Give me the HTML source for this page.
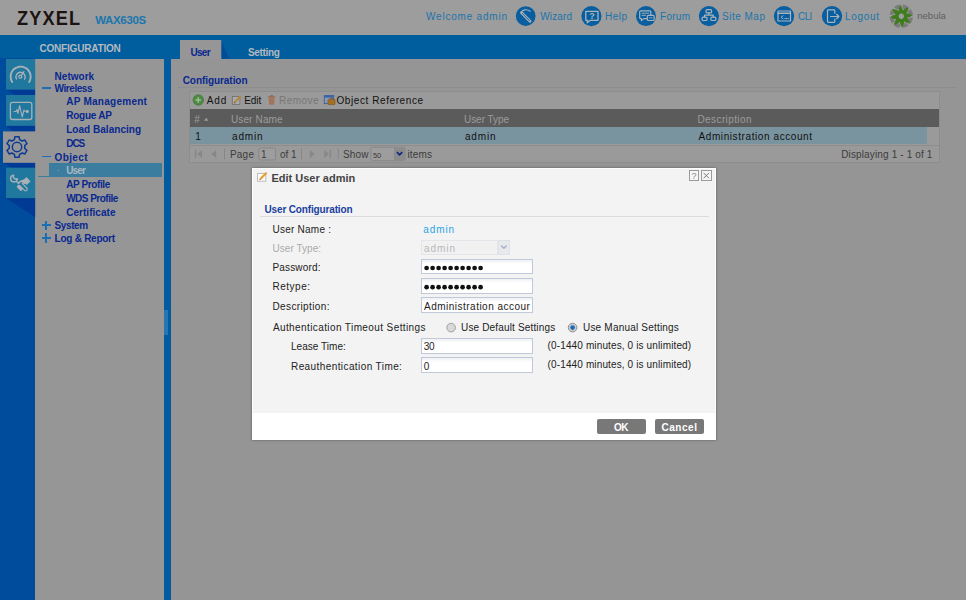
<!DOCTYPE html>
<html lang="en"><head><meta charset="utf-8"><title>ZYXEL WAX630S</title>
<style>
html,body{margin:0;padding:0}
body{width:966px;height:600px;position:relative;overflow:hidden;background:#959595;font-family:"Liberation Sans",sans-serif}
.t{position:absolute;white-space:pre;line-height:1;font-family:"Liberation Sans",sans-serif}
.b{position:absolute;box-sizing:border-box}
svg{position:absolute;overflow:visible}
.inp{border:1px solid #c0c8da;background:linear-gradient(#eef0f4 0,#fff 4px)}

</style></head>
<body>
<!-- header -->
<div class="b" style="left:0;top:0;width:966px;height:35px;background:#9d9d9d"></div>
<!-- blue bar -->
<div class="b" style="left:0;top:35px;width:966px;height:23.5px;background:#005e9e"></div>
<!-- left column -->
<div class="b" style="left:0;top:58px;width:36px;height:542px;background:#004c9c"></div>
<!-- menu panel -->
<div class="b" style="left:35.2px;top:58.5px;width:129px;height:542px;background:#969696"></div>
<!-- splitter -->
<div class="b" style="left:164px;top:58px;width:7.3px;height:542px;background:#005c9e"></div>
<div class="b" style="left:164px;top:310px;width:4px;height:25px;background:#2277b4"></div>
<!-- icon tabs -->
<svg width="36" height="600" style="left:0;top:0">
  <polygon points="6,89.5 35.2,89.5 35.2,95 16,95" fill="#003a94"/>
  <polygon points="6,125.7 35.2,125.7 35.2,131.5 14,131.5" fill="#003a94"/><polygon points="4,162.7 35.2,162.7 35.2,167.9 12,167.9" fill="#003a94"/>
  <polygon points="5.6,198 35.2,198 35.2,217" fill="#003a94"/>
  <rect x="6" y="59" width="29.2" height="30.6" fill="#20789f"/>
  <rect x="6" y="95" width="29.2" height="30.8" fill="#20789f"/>
  <rect x="3" y="131.4" width="33" height="31.4" fill="#969696"/>
  <rect x="6" y="167.7" width="29.2" height="30.4" fill="#20789f"/>
</svg>
<!-- content tabs -->
<svg width="966" height="60" style="left:0;top:0">
  <polygon points="221,40 221,58.5 229,58.5" fill="#004c98"/>
  <rect x="180" y="40" width="41.3" height="19" fill="#969696"/>
</svg>
<!-- menu highlight -->
<div class="b" style="left:49px;top:163.2px;width:113px;height:13px;background:#3b7d9e"></div>
<div class="b" style="left:38px;top:176px;width:124px;height:1px;background:#3b7d9e"></div>
<!-- tree icons -->
<div class="b" style="left:41.6px;top:87.4px;width:9.3px;height:1.8px;background:#1c6eb4"></div>
<div class="b" style="left:41.6px;top:155.7px;width:9.3px;height:1.8px;background:#1c6eb4"></div>
<div class="b" style="left:41.6px;top:224.4px;width:9.3px;height:1.8px;background:#1c6eb4"></div>
<div class="b" style="left:45.4px;top:220.7px;width:1.8px;height:9.3px;background:#1c6eb4"></div>
<div class="b" style="left:41.6px;top:237px;width:9.3px;height:1.8px;background:#1c6eb4"></div>
<div class="b" style="left:45.4px;top:233.3px;width:1.8px;height:9.3px;background:#1c6eb4"></div>
<div class="b" style="left:45.5px;top:75.5px;width:1.5px;height:1.2px;background:#8f9bb0"></div>
<div class="b" style="left:57.5px;top:101px;width:1.5px;height:1.2px;background:#8f9bb0"></div>
<div class="b" style="left:57.5px;top:115px;width:1.5px;height:1.2px;background:#8f9bb0"></div>
<div class="b" style="left:57.5px;top:129px;width:1.5px;height:1.2px;background:#8f9bb0"></div>
<div class="b" style="left:57.5px;top:142.7px;width:1.5px;height:1.2px;background:#8f9bb0"></div>
<div class="b" style="left:57.5px;top:169.8px;width:1.5px;height:1.2px;background:#7fa3b8"></div>
<div class="b" style="left:57.5px;top:183.6px;width:1.5px;height:1.2px;background:#8f9bb0"></div>
<div class="b" style="left:57.5px;top:197.5px;width:1.5px;height:1.2px;background:#8f9bb0"></div>
<div class="b" style="left:57.5px;top:211.4px;width:1.5px;height:1.2px;background:#8f9bb0"></div>

<!-- content: config line -->
<div class="b" style="left:178px;top:86.5px;width:779px;height:1px;background:#8d8d8d"></div>
<!-- grid -->
<div class="b" style="left:189px;top:91px;width:751px;height:72px;border:1px solid #8d8d8d;background:#9a9a9a"></div>
<div class="b" style="left:190px;top:109.3px;width:749px;height:17.5px;background:#5b5b5b"></div>
<div class="b" style="left:190px;top:126.8px;width:737px;height:17.6px;background:#7a949f"></div>
<div class="b" style="left:190px;top:144.5px;width:749px;height:1px;background:#8d8d8d"></div>

<!-- modal -->
<div class="b" style="left:252.3px;top:168px;width:464px;height:272px;background:#f3f3f3;border:1px solid #fdfdfd;box-shadow:0 0 2.5px rgba(0,0,0,.4)"></div>
<div class="b" style="left:253px;top:413px;width:462.3px;height:26.5px;background:#fff"></div>
<div class="b" style="left:260px;top:216px;width:449px;height:1px;background:#dcdcdc"></div>
<!-- inputs -->
<div class="b inp" style="left:421px;top:259.2px;width:112px;height:15.3px"></div>
<div class="b inp" style="left:421px;top:278.3px;width:112px;height:15.3px"></div>
<div class="b inp" style="left:421px;top:297.3px;width:112px;height:15.8px"></div>
<div class="b inp" style="left:421px;top:338px;width:112px;height:16px"></div>
<div class="b inp" style="left:421px;top:357.2px;width:112px;height:15.8px"></div>
<!-- disabled select -->
<div class="b" style="left:421px;top:239.8px;width:77px;height:15.3px;border:1px solid #e3e5eb;background:#f1f1f1"></div>
<div class="b" style="left:498px;top:239.8px;width:12px;height:15.3px;border:1px solid #dee1e7;background:#e7e9ed"></div>
<!-- buttons -->
<div class="b" style="left:596.8px;top:419.3px;width:49px;height:15px;background:#787878;border-radius:2px"></div>
<div class="b" style="left:654.7px;top:419.3px;width:49px;height:15px;background:#787878;border-radius:2px"></div>
<!-- window tools -->
<div class="b" style="left:688.8px;top:170.3px;width:10.6px;height:10.6px;border:1px solid #9a9a9a;background:#f6f6f6"></div>
<div class="b" style="left:701px;top:170.3px;width:10.6px;height:10.6px;border:1px solid #9a9a9a;background:#f6f6f6"></div>
<!-- header icons -->
<svg width="966" height="35" style="left:0;top:0">
  <g fill="#085e9e">
    <circle cx="525.7" cy="16.1" r="9.9"/>
    <circle cx="591.4" cy="16.1" r="10.1"/>
    <circle cx="646" cy="16.1" r="10"/>
    <circle cx="708.9" cy="16.1" r="10.1"/>
    <circle cx="784" cy="16.1" r="10.2"/>
    <circle cx="832" cy="16.1" r="10.2"/>
  </g>
  <g fill="none" stroke="#aab4bc" stroke-width="1.2" stroke-linecap="round" stroke-linejoin="round">
    <!-- wizard wand -->
    <path d="M521.6 12.8 L530 21.2" stroke-width="2.9"/>
    <path d="M522.4 13.6 L529.6 20.8" stroke="#085e9e" stroke-width="0.9"/>
    <path d="M520.9 12.3 C522.5 9.4 527 8.9 530.2 11.2" stroke-width="1.2"/>
    <!-- help bubble -->
    <path d="M585.8 11.3 h12.2 v9 h-7.6 l-3.2 2.4 l0.4 -2.4 h-1.8 z" stroke-width="1.3"/>
    <!-- forum bubbles -->
    <path d="M640.6 10.8 h9.3 q0.9 0 0.9 0.9 v6 q0 0.9 -0.9 0.9 h-6.1 l-2.4 2 v-2 h-0.8 q-0.9 0 -0.9 -0.9 v-6 q0 -0.9 0.9 -0.9 z"/>
    <rect x="647.3" y="15.4" width="6.8" height="5.1" rx="0.9" fill="#085e9e"/>
    <path d="M642 13.2 h6.6 M642 15.3 h3.6" stroke-width="0.9"/>
    <path d="M649.2 17.9 h3" stroke-width="0.8"/>
    <!-- site map -->
    <rect x="706" y="9.7" width="5.6" height="3.2" rx="1"/>
    <path d="M708.8 12.9 v2.3 M704.5 17.1 v-1.9 h8.8 v1.9"/>
    <rect x="702" y="17.1" width="5.1" height="3.4" rx="1.3"/>
    <rect x="710.8" y="17.1" width="5.1" height="3.4" rx="1.3"/>
    <!-- cli -->
    <rect x="778" y="11" width="12.5" height="10"/>
    <path d="M778 13.2 h12.5" stroke-width="1.4"/>
    <path d="M783 15.8 l-2 1.5 l2 1.5" stroke-width="1"/>
    <path d="M784.8 18.6 h3.6" stroke-width="1" stroke-dasharray="0.6 1"/>
    <!-- logout -->
    <path d="M834.8 13.2 v-2.6 q0 -0.8 -0.8 -0.8 h-5.7 q-0.8 0 -0.8 0.8 v11 q0 0.8 0.8 0.8 h5.7 q0.8 0 0.8 -0.8 v-2.6"/>
    <path d="M830.5 16.5 h8.2 M836.6 14.3 l2.3 2.2 l-2.3 2.2"/>
  </g>
  <text x="591.9" y="19.1" text-anchor="middle" font-family="Liberation Sans, sans-serif" font-size="9" font-weight="700" fill="#aab4bc">?</text>
  <!-- nebula -->
  <g transform="translate(901.3 16.2)">
    <g fill="#7b7b7b">
      <g id="nb"><path d="M-3.2 -11.3 Q0 -12.3 3.2 -11.3 L1.6 -7.6 Q0 -8 -1.6 -7.6 Z" transform="rotate(22.5)"/></g>
      <path d="M-3.2 -11.3 Q0 -12.3 3.2 -11.3 L1.6 -7.6 Q0 -8 -1.6 -7.6 Z" transform="rotate(67.5)"/>
      <path d="M-3.2 -11.3 Q0 -12.3 3.2 -11.3 L1.6 -7.6 Q0 -8 -1.6 -7.6 Z" transform="rotate(112.5)"/>
      <path d="M-3.2 -11.3 Q0 -12.3 3.2 -11.3 L1.6 -7.6 Q0 -8 -1.6 -7.6 Z" transform="rotate(157.5)"/>
      <path d="M-3.2 -11.3 Q0 -12.3 3.2 -11.3 L1.6 -7.6 Q0 -8 -1.6 -7.6 Z" transform="rotate(202.5)"/>
      <path d="M-3.2 -11.3 Q0 -12.3 3.2 -11.3 L1.6 -7.6 Q0 -8 -1.6 -7.6 Z" transform="rotate(247.5)"/>
      <path d="M-3.2 -11.3 Q0 -12.3 3.2 -11.3 L1.6 -7.6 Q0 -8 -1.6 -7.6 Z" transform="rotate(292.5)"/>
      <path d="M-3.2 -11.3 Q0 -12.3 3.2 -11.3 L1.6 -7.6 Q0 -8 -1.6 -7.6 Z" transform="rotate(337.5)"/>
    </g>
    <g fill="#3f7c1e">
      <path d="M0.6 -11.6 Q3.2 -6.5 1.9 -3 L-2.5 -2.3 Q-2.6 -7.5 0.6 -11.6 Z" transform="rotate(-8)"/>
      <path d="M0.6 -11.6 Q3.2 -6.5 1.9 -3 L-2.5 -2.3 Q-2.6 -7.5 0.6 -11.6 Z" transform="rotate(37)"/>
      <path d="M0.6 -11.6 Q3.2 -6.5 1.9 -3 L-2.5 -2.3 Q-2.6 -7.5 0.6 -11.6 Z" transform="rotate(82)"/>
      <path d="M0.6 -11.6 Q3.2 -6.5 1.9 -3 L-2.5 -2.3 Q-2.6 -7.5 0.6 -11.6 Z" transform="rotate(127)"/>
      <path d="M0.6 -11.6 Q3.2 -6.5 1.9 -3 L-2.5 -2.3 Q-2.6 -7.5 0.6 -11.6 Z" transform="rotate(172)"/>
      <path d="M0.6 -11.6 Q3.2 -6.5 1.9 -3 L-2.5 -2.3 Q-2.6 -7.5 0.6 -11.6 Z" transform="rotate(217)"/>
      <path d="M0.6 -11.6 Q3.2 -6.5 1.9 -3 L-2.5 -2.3 Q-2.6 -7.5 0.6 -11.6 Z" transform="rotate(262)"/>
      <path d="M0.6 -11.6 Q3.2 -6.5 1.9 -3 L-2.5 -2.3 Q-2.6 -7.5 0.6 -11.6 Z" transform="rotate(307)"/>
    </g>
  </g>
</svg>
<!-- sidebar icons -->
<svg width="40" height="220" style="left:0;top:0">
  <g fill="none" stroke="#a9b1b6" stroke-width="1.3" stroke-linecap="round" stroke-linejoin="round">
    <!-- gauge -->
    <path d="M12.2 82 A10 10 0 1 1 29.1 82" stroke-width="1.9" stroke-dasharray="3.3 0.7"/>
    <path d="M16.5 79 A4.6 4.6 0 1 1 24.5 79.2"/>
    <circle cx="20.3" cy="76.7" r="1.5"/>
    <path d="M21.3 75.5 L23.8 71.6"/>
    <!-- monitor -->
    <rect x="10.4" y="102.3" width="21.4" height="17.2" rx="2"/>
    <path d="M14 111.5 h2 l1 -2 l1 4 l1.6 -8 l2.6 11.5 l1.8 -7 l1.2 1.5 h1.8" stroke-width="1.1"/>
    <circle cx="27.3" cy="111.4" r="0.9" fill="#a9b1b6"/>
  </g>
  <!-- gear -->
  <g transform="translate(17 147)" fill="none" stroke="#0a3a96" stroke-width="1.5" stroke-linejoin="round">
    <circle r="4.7"/>
    <path d="M-2.10,-10.30 L2.10,-10.30 L2.60,-7.46 L5.16,-5.98 L7.87,-6.97 L9.97,-3.33 L7.76,-1.48 L7.76,1.48 L9.97,3.33 L7.87,6.97 L5.16,5.98 L2.60,7.46 L2.10,10.30 L-2.10,10.30 L-2.60,7.46 L-5.16,5.98 L-7.87,6.97 L-9.97,3.33 L-7.76,1.48 L-7.76,-1.48 L-9.97,-3.33 L-7.87,-6.97 L-5.16,-5.98 L-2.60,-7.46 Z"/>
  </g>
  <!-- wrench + hand -->
  <g fill="none" stroke="#a9b1b6" stroke-width="1.4" stroke-linecap="round" stroke-linejoin="round">
    <path d="M13.6 175.2 a3.4 3.4 0 1 0 3.8 3.6 l-2.2 0.3 l-1.9 -1.7 z"/>
    <path d="M16.6 181.6 L18.6 183.6"/>
    <path d="M22.2 183.4 l4.6 4.6 a1.6 1.6 0 0 1 -2.3 2.3 l-4.6 -4.6" stroke-width="1.1"/>
    <path d="M18.8 182.6 q2.5 -2.6 6 -2.4" stroke-width="1.6"/>
  </g>
  <g fill="#a9b1b6">
    <rect x="-2.6" y="-2.9" width="5.2" height="5.8" transform="translate(26.6 181) rotate(-45)"/>
    <path d="M20.5 181 l4 -1.6 l2.5 3.4 l-3 1.4 z"/>
    <rect x="-1.7" y="-3.2" width="3.4" height="6.4" rx="0.8" transform="translate(19.8 187.8) rotate(-45)"/>
  </g>
</svg>
<!-- grid toolbar icons -->
<svg width="966" height="170" style="left:0;top:0">
  <!-- add -->
  <circle cx="198.3" cy="100" r="5.2" fill="#4f8a44" stroke="#41763a" stroke-width="0.8"/>
  <path d="M195.5 100 h5.6 M198.3 97.2 v5.6" stroke="#9dbd96" stroke-width="1.4"/>
  <!-- edit -->
  <rect x="232.3" y="96.5" width="7.6" height="8" fill="#aaaaaa" stroke="#6e6e6e" stroke-width="0.8"/>
  <path d="M234.6 102.4 L240.6 96.2" stroke="#b58a35" stroke-width="2"/>
  <path d="M233.8 103.4 l0.5 -1.6 l1.1 1.1 z" fill="#5a4a3a"/>
  <!-- remove -->
  <path d="M268.6 97.8 h6 l-0.5 7 h-5 z" fill="#a3745c"/>
  <path d="M267.8 96.9 h7.6 M270.3 95.7 h2.6" stroke="#9a6a52" stroke-width="1.2"/>
  <!-- object reference -->
  <rect x="324.3" y="95.6" width="9.4" height="8" fill="#8a9cb4" stroke="#3d5f98" stroke-width="0.9"/>
  <rect x="324.3" y="95.6" width="9.4" height="2" fill="#3a63a8"/>
  <rect x="328" y="99.4" width="7" height="5.2" rx="0.8" fill="#a86f22" stroke="#7a4f18" stroke-width="0.6"/>
  <path d="M330.2 99.3 v-1 h2.6 v1" fill="none" stroke="#7a4f18" stroke-width="0.8"/>
  <!-- sort arrow -->
  <path d="M204 120.8 l2.2 -3 l2.2 3 z" fill="#9c9c9c"/>
  <!-- paging icons -->
  <g fill="#878787">
    <rect x="194.8" y="150" width="1.6" height="8"/>
    <path d="M202 150 v8 l-4.8 -4 z"/>
    <path d="M216.2 150 v8 l-4.8 -4 z"/>
    <path d="M309.8 150 v8 l4.8 -4 z"/>
    <path d="M324.2 150 v8 l4.8 -4 z"/>
    <rect x="329.6" y="150" width="1.6" height="8"/>
    <rect x="224" y="148.5" width="1" height="11"/>
    <rect x="301" y="148.5" width="1" height="11"/>
    <rect x="337.8" y="148.5" width="1" height="11"/>
  </g>
  <rect x="258.9" y="148" width="16.5" height="12" rx="1.5" fill="#9e9e9e" stroke="#878789" stroke-width="1"/>
  <rect x="370.9" y="147.2" width="34.3" height="13.4" rx="1.5" fill="#9d9d9d" stroke="#89898d" stroke-width="1"/>
  <rect x="394" y="147.7" width="10.8" height="12.4" fill="#8b8b8e"/>
  <path d="M397 152.2 l2.6 2.6 l2.6 -2.6" fill="none" stroke="#0a2a7c" stroke-width="1.7"/>
</svg>
<!-- modal icons -->
<svg width="966" height="600" style="left:0;top:0">
  <!-- title icon -->
  <rect x="257.6" y="173.4" width="8.2" height="7.8" fill="#fdfdfd" stroke="#b4b4b4" stroke-width="0.9"/>
  <path d="M260.3 179 L266.6 172.7" stroke="#e2a02c" stroke-width="2.1"/>
  <path d="M259.3 180.2 l0.6 -1.8 l1.2 1.2 z" fill="#c8503a"/>
  <!-- help / close glyphs -->
  <path d="M703.6 172.9 l5.4 5.4 M709 172.9 l-5.4 5.4" stroke="#7c7c7c" stroke-width="1"/>
  <text x="691.6" y="179.3" font-family="Liberation Sans, sans-serif" font-size="9" fill="#8a8a8a">?</text>
  <!-- select arrow -->
  <path d="M501.2 245.6 l2.7 2.6 l2.7 -2.6" fill="none" stroke="#a9b3c8" stroke-width="1.5"/>
  <!-- password dots -->
  <g fill="#111">
    <circle cx="426.6" cy="268" r="2.35"/><circle cx="432.6" cy="268" r="2.35"/><circle cx="438.6" cy="268" r="2.35"/><circle cx="444.6" cy="268" r="2.35"/><circle cx="450.6" cy="268" r="2.35"/>
    <circle cx="456.6" cy="268" r="2.35"/><circle cx="462.6" cy="268" r="2.35"/><circle cx="468.6" cy="268" r="2.35"/><circle cx="474.6" cy="268" r="2.35"/><circle cx="480.6" cy="268" r="2.35"/>
    <circle cx="426.6" cy="287.2" r="2.35"/><circle cx="432.6" cy="287.2" r="2.35"/><circle cx="438.6" cy="287.2" r="2.35"/><circle cx="444.6" cy="287.2" r="2.35"/><circle cx="450.6" cy="287.2" r="2.35"/>
    <circle cx="456.6" cy="287.2" r="2.35"/><circle cx="462.6" cy="287.2" r="2.35"/><circle cx="468.6" cy="287.2" r="2.35"/><circle cx="474.6" cy="287.2" r="2.35"/><circle cx="480.6" cy="287.2" r="2.35"/>
  </g>
  <!-- radios -->
  <circle cx="451.1" cy="327.6" r="4.3" fill="#d9d9d9" stroke="#a0a0a0" stroke-width="1"/>
  <circle cx="572.6" cy="327.6" r="4.3" fill="#cfcfcf" stroke="#8f8f8f" stroke-width="1"/>
  <circle cx="572.6" cy="327.6" r="2.3" fill="#1a6ab8"/>
</svg>

<span class="t" style="left:16.8px;top:9.0px;font-size:19.5px;font-weight:700;color:#1c1212;letter-spacing:1.25px;transform:scaleX(0.93);transform-origin:0 0;">ZYXEL</span>
<span class="t" style="left:95.2px;top:15.0px;font-size:11.5px;font-weight:700;color:#1a76ae;letter-spacing:-0.34px;">WAX630S</span>
<span class="t" style="left:426.0px;top:12.0px;font-size:10px;font-weight:400;color:#1b74ab;letter-spacing:0.79px;">Welcome admin</span>
<span class="t" style="left:540.3px;top:12.0px;font-size:10px;font-weight:400;color:#1b74ab;letter-spacing:0.12px;">Wizard</span>
<span class="t" style="left:605.0px;top:12.0px;font-size:10px;font-weight:400;color:#1b74ab;letter-spacing:0.47px;">Help</span>
<span class="t" style="left:660.0px;top:12.0px;font-size:10px;font-weight:400;color:#1b74ab;letter-spacing:0.27px;">Forum</span>
<span class="t" style="left:722.0px;top:12.0px;font-size:10px;font-weight:400;color:#1b74ab;letter-spacing:0.50px;">Site Map</span>
<span class="t" style="left:798.1px;top:12.0px;font-size:10px;font-weight:400;color:#1b74ab;letter-spacing:-0.63px;">CLI</span>
<span class="t" style="left:845.0px;top:12.0px;font-size:10px;font-weight:400;color:#1b74ab;letter-spacing:0.68px;">Logout</span>
<span class="t" style="left:917.2px;top:11.0px;font-size:9.5px;font-weight:400;color:#606060;letter-spacing:0.03px;">nebula</span>
<span class="t" style="left:39.4px;top:44.0px;font-size:10px;font-weight:700;color:#b4b9bd;letter-spacing:-0.19px;">CONFIGURATION</span>
<span class="t" style="left:190.5px;top:48.0px;font-size:10px;font-weight:700;color:#092890;letter-spacing:-0.72px;">User</span>
<span class="t" style="left:248.0px;top:48.0px;font-size:10px;font-weight:700;color:#b4b9bd;letter-spacing:-0.32px;">Setting</span>
<span class="t" style="left:54.6px;top:72.0px;font-size:10px;font-weight:700;color:#092890;letter-spacing:0.01px;">Network</span>
<span class="t" style="left:54.6px;top:84.0px;font-size:10px;font-weight:700;color:#092890;letter-spacing:-0.45px;">Wireless</span>
<span class="t" style="left:66.2px;top:97.0px;font-size:10px;font-weight:700;color:#092890;letter-spacing:0.26px;">AP Management</span>
<span class="t" style="left:66.2px;top:111.0px;font-size:10px;font-weight:700;color:#092890;letter-spacing:-0.23px;">Rogue AP</span>
<span class="t" style="left:66.2px;top:125.0px;font-size:10px;font-weight:700;color:#092890;letter-spacing:0.03px;">Load Balancing</span>
<span class="t" style="left:66.2px;top:139.0px;font-size:10px;font-weight:700;color:#092890;letter-spacing:-1.01px;">DCS</span>
<span class="t" style="left:54.6px;top:153.0px;font-size:10px;font-weight:700;color:#092890;letter-spacing:0.37px;">Object</span>
<span class="t" style="left:66.2px;top:166.0px;font-size:10px;font-weight:700;color:#a9b7c0;letter-spacing:-0.85px;">User</span>
<span class="t" style="left:66.2px;top:180.0px;font-size:10px;font-weight:700;color:#092890;letter-spacing:-0.40px;">AP Profile</span>
<span class="t" style="left:66.2px;top:194.0px;font-size:10px;font-weight:700;color:#092890;letter-spacing:-0.52px;">WDS Profile</span>
<span class="t" style="left:66.2px;top:208.0px;font-size:10px;font-weight:700;color:#092890;letter-spacing:0.04px;">Certificate</span>
<span class="t" style="left:54.6px;top:221.0px;font-size:10px;font-weight:700;color:#092890;letter-spacing:-0.40px;">System</span>
<span class="t" style="left:54.6px;top:234.0px;font-size:10px;font-weight:700;color:#092890;letter-spacing:-0.26px;">Log &amp; Report</span>
<span class="t" style="left:182.7px;top:76.0px;font-size:10px;font-weight:700;color:#092890;letter-spacing:-0.06px;">Configuration</span>
<span class="t" style="left:206.7px;top:96.0px;font-size:10px;font-weight:400;color:#111;letter-spacing:0.95px;">Add</span>
<span class="t" style="left:244.3px;top:96.0px;font-size:10px;font-weight:400;color:#111;letter-spacing:-0.11px;">Edit</span>
<span class="t" style="left:279.0px;top:96.0px;font-size:10px;font-weight:400;color:#777;letter-spacing:0.45px;">Remove</span>
<span class="t" style="left:336.5px;top:96.0px;font-size:10px;font-weight:400;color:#111;letter-spacing:0.58px;">Object Reference</span>
<span class="t" style="left:194.2px;top:115.0px;font-size:10px;font-weight:400;color:#9c9c9c;letter-spacing:0.24px;">#</span>
<span class="t" style="left:230.9px;top:115.0px;font-size:10px;font-weight:400;color:#9c9c9c;letter-spacing:0.15px;">User Name</span>
<span class="t" style="left:464.0px;top:115.0px;font-size:10px;font-weight:400;color:#9c9c9c;letter-spacing:-0.05px;">User Type</span>
<span class="t" style="left:697.5px;top:115.0px;font-size:10px;font-weight:400;color:#9c9c9c;letter-spacing:0.40px;">Description</span>
<span class="t" style="left:195.2px;top:132.0px;font-size:10px;font-weight:400;color:#111;letter-spacing:-2.76px;">1</span>
<span class="t" style="left:232.1px;top:132.0px;font-size:10px;font-weight:400;color:#111;letter-spacing:0.79px;">admin</span>
<span class="t" style="left:465.0px;top:132.0px;font-size:10px;font-weight:400;color:#111;letter-spacing:0.81px;">admin</span>
<span class="t" style="left:698.5px;top:132.0px;font-size:10px;font-weight:400;color:#111;letter-spacing:0.59px;">Administration account</span>
<span class="t" style="left:229.9px;top:150.0px;font-size:10px;font-weight:400;color:#3c3c3c;letter-spacing:0.25px;">Page</span>
<span class="t" style="left:261.0px;top:150.0px;font-size:10px;font-weight:400;color:#3c3c3c;letter-spacing:-2.06px;">1</span>
<span class="t" style="left:280.0px;top:150.0px;font-size:10px;font-weight:400;color:#3c3c3c;letter-spacing:-0.06px;">of 1</span>
<span class="t" style="left:343.0px;top:150.0px;font-size:10px;font-weight:400;color:#3c3c3c;letter-spacing:0.13px;">Show</span>
<span class="t" style="left:372.9px;top:152.0px;font-size:7.5px;font-weight:400;color:#3c3c3c;letter-spacing:-0.04px;">50</span>
<span class="t" style="left:407.5px;top:150.0px;font-size:10px;font-weight:400;color:#3c3c3c;letter-spacing:0.15px;">items</span>
<span class="t" style="left:841.2px;top:150.0px;font-size:10px;font-weight:400;color:#3c3c3c;letter-spacing:0.14px;">Displaying 1 - 1 of 1</span>
<span class="t" style="left:271.4px;top:173.0px;font-size:11px;font-weight:700;color:#444;letter-spacing:0.01px;">Edit User admin</span>
<span class="t" style="left:264.5px;top:205.0px;font-size:10px;font-weight:700;color:#1a3fa0;letter-spacing:-0.15px;">User Configuration</span>
<span class="t" style="left:272.5px;top:225.0px;font-size:10px;font-weight:400;color:#222;letter-spacing:0.24px;">User Name :</span>
<span class="t" style="left:423.2px;top:225.0px;font-size:10px;font-weight:400;color:#2aa3e6;letter-spacing:0.94px;">admin</span>
<span class="t" style="left:272.5px;top:244.0px;font-size:10px;font-weight:400;color:#aaa;letter-spacing:0.04px;">User Type:</span>
<span class="t" style="left:424.0px;top:244.0px;font-size:10px;font-weight:400;color:#b8b8b8;letter-spacing:0.94px;">admin</span>
<span class="t" style="left:272.5px;top:263.0px;font-size:10px;font-weight:400;color:#222;letter-spacing:0.16px;">Password:</span>
<span class="t" style="left:272.5px;top:282.0px;font-size:10px;font-weight:400;color:#222;letter-spacing:0.51px;">Retype:</span>
<span class="t" style="left:272.5px;top:302.0px;font-size:10px;font-weight:400;color:#222;letter-spacing:0.38px;">Description:</span>
<span class="t" style="left:424.0px;top:302.0px;font-size:10px;font-weight:400;color:#222;letter-spacing:0.49px;">Administration accour</span>
<span class="t" style="left:272.9px;top:323.0px;font-size:10px;font-weight:400;color:#222;letter-spacing:0.40px;">Authentication Timeout Settings</span>
<span class="t" style="left:461.0px;top:323.0px;font-size:10px;font-weight:400;color:#222;letter-spacing:0.16px;">Use Default Settings</span>
<span class="t" style="left:583.0px;top:323.0px;font-size:10px;font-weight:400;color:#222;letter-spacing:0.20px;">Use Manual Settings</span>
<span class="t" style="left:291.0px;top:342.0px;font-size:10px;font-weight:400;color:#222;letter-spacing:0.04px;">Lease Time:</span>
<span class="t" style="left:423.7px;top:342.0px;font-size:10px;font-weight:400;color:#222;letter-spacing:-0.32px;">30</span>
<span class="t" style="left:547.6px;top:341.0px;font-size:10px;font-weight:400;color:#222;letter-spacing:0.13px;">(0-1440 minutes, 0 is unlimited)</span>
<span class="t" style="left:291.0px;top:362.0px;font-size:10px;font-weight:400;color:#222;letter-spacing:0.41px;">Reauthentication Time:</span>
<span class="t" style="left:423.7px;top:362.0px;font-size:10px;font-weight:400;color:#222;letter-spacing:-0.56px;">0</span>
<span class="t" style="left:547.6px;top:360.0px;font-size:10px;font-weight:400;color:#222;letter-spacing:0.13px;">(0-1440 minutes, 0 is unlimited)</span>
<span class="t" style="left:614.0px;top:423.0px;font-size:10px;font-weight:700;color:#fff;letter-spacing:-0.50px;">OK</span>
<span class="t" style="left:661.5px;top:423.0px;font-size:10px;font-weight:700;color:#fff;letter-spacing:0.54px;">Cancel</span>
</body></html>
